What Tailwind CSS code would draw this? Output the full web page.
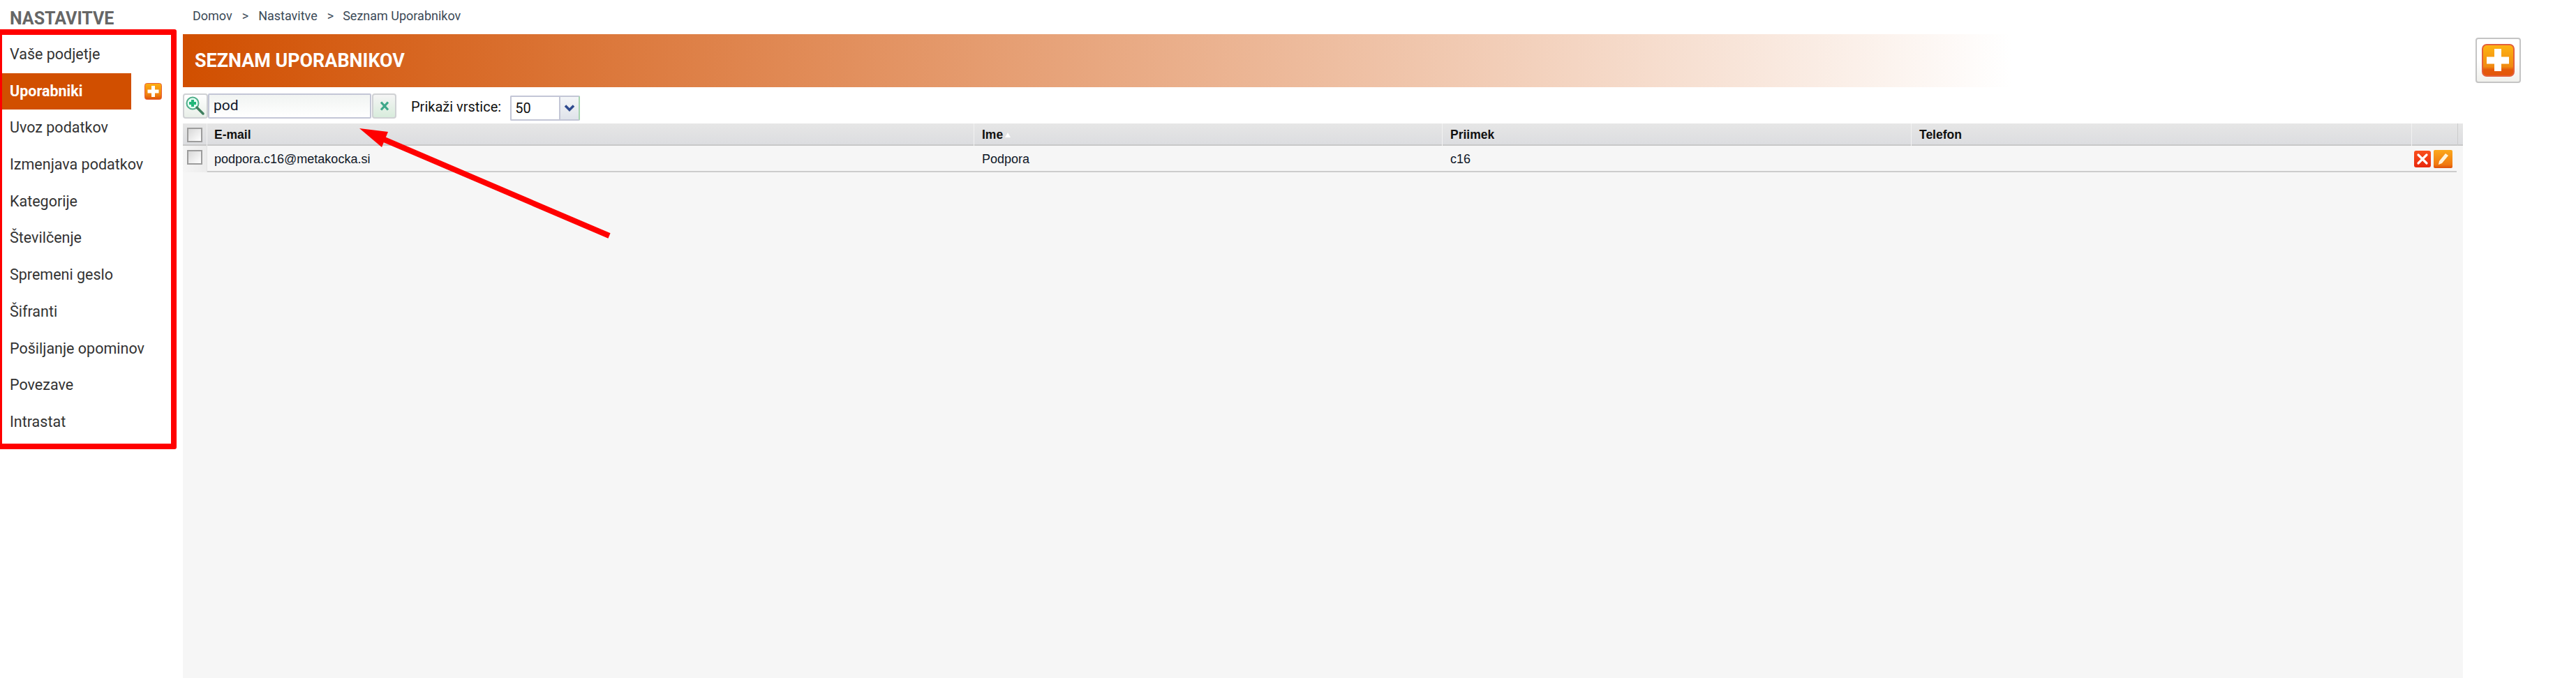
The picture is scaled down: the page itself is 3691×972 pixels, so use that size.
<!DOCTYPE html>
<html><head><meta charset="utf-8"><script src="https://cdn.jsdelivr.net/npm/@tailwindcss/browser@4"></script></head>
<body class="bg-white">
<div class="relative flex w-[3691px] h-[972px] overflow-hidden font-['Roboto',sans-serif]">
  <aside class="w-[262px] shrink-0 pt-[12px]">
    <h2 class="pl-[14px] h-[30px] leading-[30px] text-[25px] font-bold text-[#666666]">NASTAVITVE</h2>
    <nav class="mt-[10px] text-[21.500px] text-[#333333] leading-[52px]">
      <a class="block h-[52.700px] pl-[14px]">Vaše podjetje</a>
      <div class="flex items-center h-[52.700px]">
        <a class="block w-[188px] h-[52px] pl-[14px] bg-[#d14f00] text-white font-bold">Uporabniki</a>
        <svg class="ml-[19px]" width="25" height="25" viewBox="0 0 25 25"><defs><linearGradient id="g1" x1="0" y1="0" x2="0" y2="1"><stop offset="0" stop-color="#fdb010"/><stop offset="0.7" stop-color="#f08010"/><stop offset="1" stop-color="#dd4f08"/></linearGradient></defs><rect x="0.5" y="0.5" width="24" height="23" rx="3" fill="url(#g1)" stroke="#e8603a"/><path d="M10 4h5v5.500h5.500v5H15V20h-5v-5.500H4.500v-5H10z" fill="#fff"/></svg>
      </div>
      <a class="block h-[52.700px] pl-[14px]">Uvoz podatkov</a>
      <a class="block h-[52.700px] pl-[14px]">Izmenjava podatkov</a>
      <a class="block h-[52.700px] pl-[14px]">Kategorije</a>
      <a class="block h-[52.700px] pl-[14px]">Številčenje</a>
      <a class="block h-[52.700px] pl-[14px]">Spremeni geslo</a>
      <a class="block h-[52.700px] pl-[14px]">Šifranti</a>
      <a class="block h-[52.700px] pl-[14px]">Pošiljanje opominov</a>
      <a class="block h-[52.700px] pl-[14px]">Povezave</a>
      <a class="block h-[52.700px] pl-[14px]">Intrastat</a>
    </nav>
  </aside>
  <main class="w-[3267px] shrink-0 flex flex-col">
    <div class="h-[49px] pl-[14px] pt-[13px] text-[18px] leading-[20px] text-[#3c4a57] flex">
      <span>Domov</span><span class="ml-[14px]">&gt;</span><span class="ml-[14px]">Nastavitve</span><span class="ml-[14px]">&gt;</span><span class="ml-[13px]">Seznam Uporabnikov</span>
    </div>
    <div class="h-[76px] w-[2620px] pl-[17px] flex items-center bg-linear-to-r/srgb from-[#d14f00] to-white text-white font-bold text-[26.900px]">SEZNAM UPORABNIKOV</div>
    <div class="h-[52px] flex items-start pt-[9px] text-[#111111]">
      <div class="w-[36px] h-[36px] rounded-[4px] border-2 border-[#cfd1d4] bg-gradient-to-b from-white to-[#e8efe8] flex items-center justify-center">
        <svg width="30" height="30" viewBox="0 0 30 30"><circle cx="11" cy="11" r="8.500" fill="#e6fff4" stroke="#4fae8a" stroke-width="2"/><path d="M9 6h4v3h3v4h-3v3H9v-3H6V9h3z" fill="#22b77a"/><path d="M17 17l9 9" stroke="#3f7f5f" stroke-width="3.500" stroke-linecap="round"/></svg>
      </div>
      <div class="w-[234px] h-[36px] border-2 border-[#c3c6d6] bg-gradient-to-b from-[#f1f4f2] to-white rounded-[2px] pl-[6px] text-[21px] leading-[30px] text-[#10182a]">pod</div>
      <div class="ml-[1px] w-[35px] h-[36px] rounded-[4px] border-2 border-[#cfd1d4] bg-gradient-to-b from-[#f5f5f5] to-[#d8ecdc] flex items-center justify-center">
        <svg width="16" height="16" viewBox="0 0 16 16"><path d="M3 2.500l10 11M13 2.500l-10 11" stroke="#3fa88a" stroke-width="3.200"/></svg>
      </div>
      <span class="ml-[21px] text-[20px] leading-[38px]">Prikaži vrstice:</span>
      <div class="ml-[13px] mt-[3px] w-[100px] h-[36px] flex border-2 border-[#c3c6d6] border-r-[#a7d4b0] rounded-[2px] bg-white">
        <span class="w-[69px] pl-[5px] text-[20px] leading-[32px]">50</span>
        <span class="w-[29px] bg-gradient-to-b from-[#f4f6f8] to-[#dfe3ea] border-l-2 border-[#c3c6d6] flex items-center justify-center">
          <svg width="16" height="12" viewBox="0 0 16 12"><path d="M2 2.500l6 6 6-6" fill="none" stroke="#2e4a8e" stroke-width="3.500"/></svg>
        </span>
      </div>
    </div>
    <div class="w-[3267px] flex-1 bg-[#f6f6f6] font-['Liberation_Sans',sans-serif] text-[18px] text-[#111111]">
      <div class="grid grid-cols-[35px_1099px_671px_672px_717px_66px_7px] h-[32px] bg-gradient-to-b from-[#e6e6e6] to-[#dcdde0] border-b-2 border-[#c8c8c8] font-bold text-[17.500px] leading-[32px]">
        <div class="flex items-center pl-[6px] border-r border-[#f2f2f2]"><span class="block w-[22px] h-[21px] border-2 border-[#9c9c9c] bg-gradient-to-br from-[#d8d8d8] to-white"></span></div>
        <div class="pl-[10px] border-r border-[#f2f2f2]">E-mail</div>
        <div class="pl-[11px] border-r border-[#f2f2f2] flex items-center gap-[3px]">Ime<svg width="8" height="7" viewBox="0 0 8 7"><path d="M0 7L4 0l4 7z" fill="#fff"/></svg></div>
        <div class="pl-[11px] border-r border-[#f2f2f2]">Priimek</div>
        <div class="pl-[11px] border-r border-[#f2f2f2]">Telefon</div>
        <div class="border-r border-[#cccccc]"></div>
        <div></div>
      </div>
      <div class="grid grid-cols-[35px_1099px_671px_672px_717px_64px] w-[3258px] h-[38px] border-b-2 border-[#cccccc] leading-[38px]">
        <div class="pl-[6px] pt-[6px] border-r border-[#e4e4e4] bg-gradient-to-r from-[#f5f5f5] to-[#ececec]"><span class="block w-[22px] h-[21px] border-2 border-[#9c9c9c] bg-gradient-to-br from-[#d8d8d8] to-white"></span></div>
        <div class="pl-[10px] text-[#101828]">podpora.c16@metakocka.si</div>
        <div class="pl-[11px] text-[#101828]">Podpora</div>
        <div class="pl-[11px] text-[#101828]">c16</div>
        <div></div>
        <div class="flex items-start pt-[7px] pl-[3px] gap-[4px]">
          <svg width="24" height="24" viewBox="0 0 24 24"><defs><linearGradient id="g2" x1="0" y1="0" x2="0" y2="1"><stop offset="0" stop-color="#f9501e"/><stop offset="1" stop-color="#e8280c"/></linearGradient></defs><rect width="24" height="24" rx="3" fill="url(#g2)"/><path d="M6 6l12 12M18 6L6 18" stroke="#fff" stroke-width="3.200" stroke-linecap="round"/></svg>
          <svg class="-mt-[1px]" width="27" height="26" viewBox="0 0 27 26"><defs><linearGradient id="g3" x1="0" y1="0" x2="0" y2="1"><stop offset="0" stop-color="#fba81c"/><stop offset="0.8" stop-color="#f07a10"/><stop offset="1" stop-color="#de4f0a"/></linearGradient></defs><rect width="27" height="26" rx="2" fill="url(#g3)"/><path d="M17 5l4 3-9 11-5 2 1-5z" fill="#fff4dc"/></svg>
        </div>
      </div>
    </div>
  </main>
  <div class="absolute left-[3547px] top-[54px] w-[65px] h-[65px] rounded-[4px] border-2 border-[#c4c4c4] bg-gradient-to-b from-white via-white to-[#f0f0ec] flex items-center justify-center">
    <svg width="47" height="47" viewBox="0 0 47 47"><defs><linearGradient id="g4" x1="0" y1="0" x2="0" y2="1"><stop offset="0" stop-color="#feb512"/><stop offset="0.7" stop-color="#f08a12"/><stop offset="0.8" stop-color="#e45a0a"/><stop offset="1" stop-color="#e4560a"/></linearGradient></defs><rect x="1" y="1" width="45" height="45" rx="6" fill="url(#g4)" stroke="#e4603a" stroke-width="2"/><path d="M18 7h10v11.500h11v10H28V39H18V28.500H7v-10h11z" fill="#fff"/></svg>
  </div>
  <div class="absolute -left-[5px] top-[42px] w-[258px] h-[602px] border-[8px] border-[#ff0000] rounded-[3px]"></div>
  <svg class="absolute left-0 top-0 pointer-events-none" width="3691" height="972" viewBox="0 0 3691 972"><path d="M873 338L548 199" stroke="#ff0000" stroke-width="8" fill="none"/><path d="M515 184L556 189L547 211z" fill="#ff0000"/></svg>
</div>
</body></html>
